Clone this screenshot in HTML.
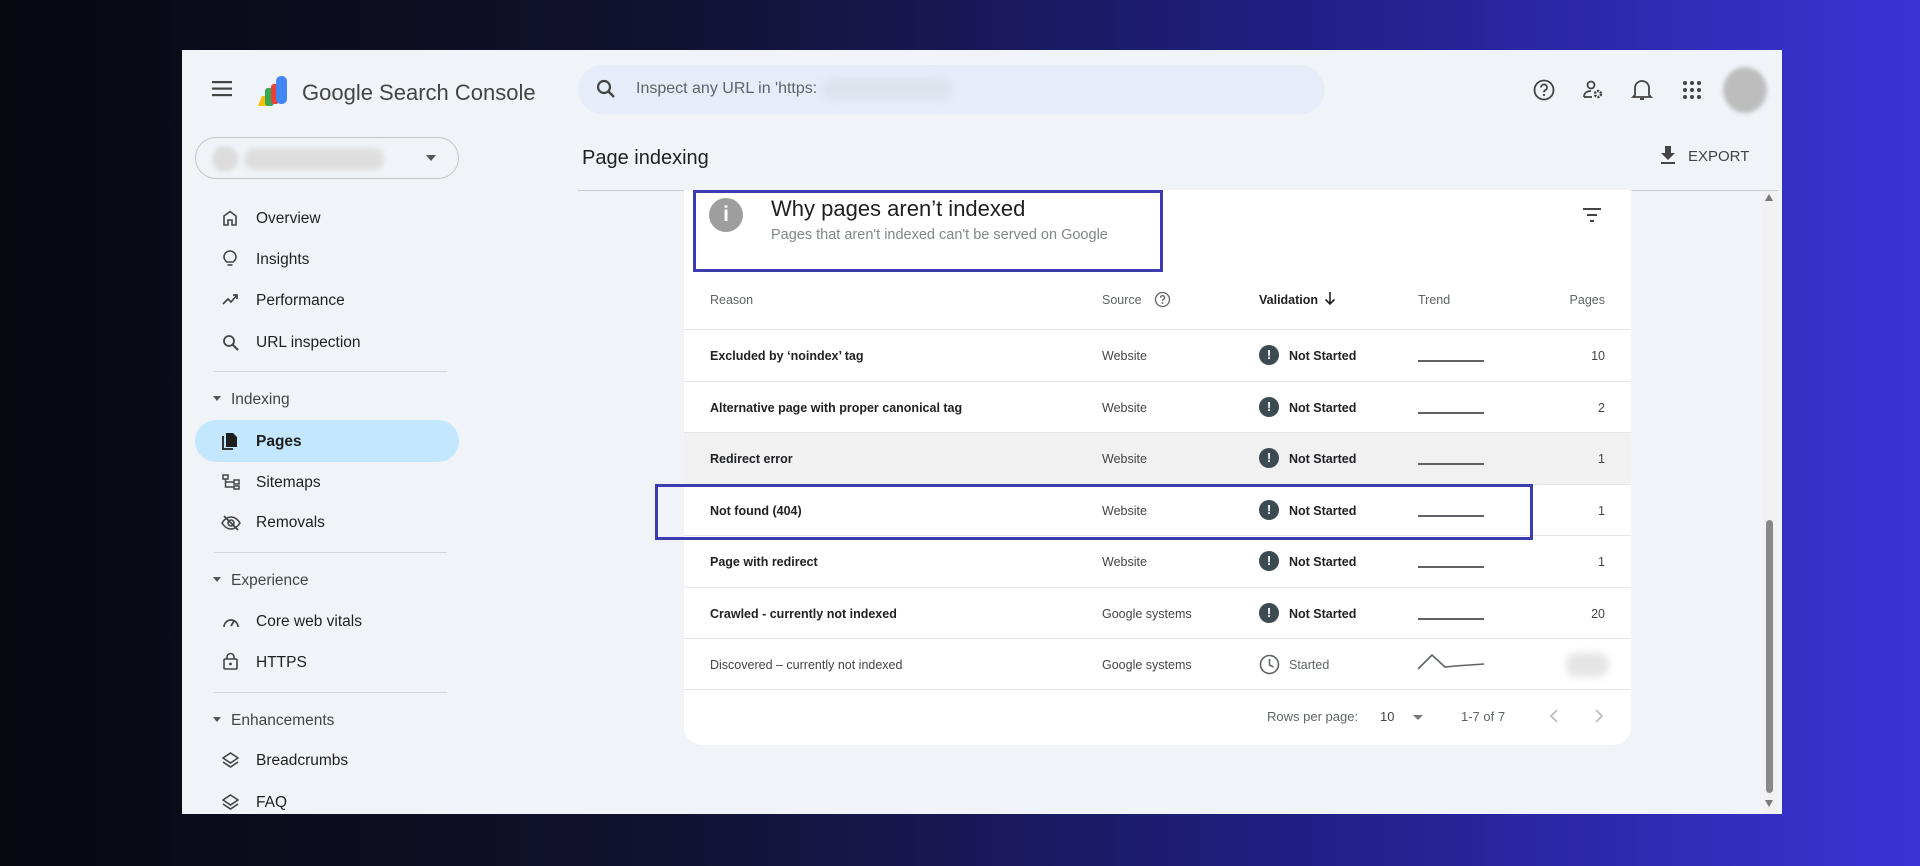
<!DOCTYPE html>
<html><head><meta charset="utf-8"><style>
*{margin:0;padding:0;box-sizing:border-box}
body{width:1920px;height:866px;overflow:hidden;font-family:"Liberation Sans",sans-serif;background:linear-gradient(90deg,#08080f 0%,#111230 35%,#22208a 70%,#3a34d6 100%);position:relative}
.a{position:absolute}
#panel{left:182px;top:50px;width:1600px;height:764px;background:#f0f4f9;overflow:hidden}
.t{position:absolute;white-space:nowrap;line-height:1}
.nav{font-size:15.5px;color:#1f1f1f}
.sec{font-size:15.5px;color:#444}
.div{position:absolute;height:1px;background:#d3d7dc}
.row{position:absolute;left:0;width:947px;height:52px;border-top:1px solid #e6e6e6}
.rt{position:absolute;top:19px;font-size:12.5px;color:#202124;font-weight:bold;white-space:nowrap}
.src{position:absolute;left:418px;top:19px;font-size:12.5px;color:#444}
.ns{position:absolute;left:575px;top:15px;width:20px;height:20px;border-radius:50%;background:#3c4a52;color:#fff;font-size:13px;font-weight:bold;text-align:center;line-height:20px}
.nst{position:absolute;left:605px;top:19px;font-size:12.5px;color:#202124;font-weight:bold}
.tr{position:absolute;left:734px;top:30px;width:66px;height:2px;background:#5f6368}
.pg{position:absolute;right:26px;top:19px;font-size:12.5px;color:#444}
</style></head><body>
<div id="panel" class="a">
 <svg class="a" style="left:30px;top:29px" width="22" height="20" viewBox="0 0 22 20"><rect y="2" width="20" height="2.2" fill="#444"/><rect y="8.5" width="20" height="2.2" fill="#444"/><rect y="15" width="20" height="2.2" fill="#444"/></svg>
 <svg class="a" style="left:74px;top:24px" width="36" height="34" viewBox="0 0 36 34"><path d="M2 32 L6 22 L12 22 L12 32Z" fill="#fbbc04"/><rect x="9" y="14" width="9" height="18" rx="3" fill="#34a853"/><rect x="15" y="10" width="8" height="20" rx="3" fill="#ea4335"/><rect x="20" y="2" width="11" height="28" rx="5" fill="#4285f4"/></svg>
 <div class="t" style="left:120px;top:32px;font-size:22px;color:#444">Google Search Console</div>
 <div class="a" style="left:396px;top:15px;width:747px;height:49px;border-radius:25px;background:#e6edf8"></div>
 <svg class="a" style="left:414px;top:29px" width="20" height="20" viewBox="0 0 20 20"><circle cx="8" cy="8" r="6" stroke="#444" stroke-width="2.2" fill="none"/><path d="M12.5 12.5 L18 18" stroke="#444" stroke-width="2.4"/></svg>
 <div class="t" style="left:454px;top:31px;font-size:16px;color:#5f6368">Inspect any URL in 'https:</div>
 <div class="a" style="left:640px;top:28px;width:130px;height:22px;border-radius:11px;background:#dde3ec;filter:blur(4px)"></div>
 <svg class="a" style="left:1350px;top:28px" width="24" height="24" viewBox="0 0 24 24"><circle cx="12" cy="12" r="9.5" stroke="#444" stroke-width="1.8" fill="none"/><path d="M9 9.5a3 3 0 1 1 4.2 2.7c-.9.5-1.2 1-1.2 2" stroke="#444" stroke-width="1.8" fill="none"/><circle cx="12" cy="17" r="1.1" fill="#444"/></svg>
 <svg class="a" style="left:1399px;top:28px" width="24" height="24" viewBox="0 0 24 24"><circle cx="10" cy="7" r="3.5" stroke="#444" stroke-width="1.8" fill="none"/><path d="M3 19c0-4 3-6 7-6" stroke="#444" stroke-width="1.8" fill="none"/><path d="M3 19h8" stroke="#444" stroke-width="1.8"/><circle cx="17" cy="16" r="3" stroke="#444" stroke-width="2.5" fill="none" stroke-dasharray="2 1.2"/></svg>
 <svg class="a" style="left:1448px;top:27px" width="24" height="26" viewBox="0 0 24 26"><path d="M5 18V11a7 7 0 0 1 14 0v7l2 2H3z" stroke="#444" stroke-width="1.8" fill="none"/><path d="M10 22h4" stroke="#444" stroke-width="2"/></svg>
 <svg class="a" style="left:1500px;top:30px" width="20" height="20" viewBox="0 0 20 20" fill="#444"><circle cx="3" cy="3" r="2"/><circle cx="10" cy="3" r="2"/><circle cx="17" cy="3" r="2"/><circle cx="3" cy="10" r="2"/><circle cx="10" cy="10" r="2"/><circle cx="17" cy="10" r="2"/><circle cx="3" cy="17" r="2"/><circle cx="10" cy="17" r="2"/><circle cx="17" cy="17" r="2"/></svg>
 <div class="a" style="left:1541px;top:17px;width:44px;height:46px;border-radius:50%;background:#bdbdbd;filter:blur(2px)"></div>

 <div class="a" style="left:13px;top:87px;width:264px;height:42px;border:1px solid #c4c7c5;border-radius:21px"></div>
 <div class="a" style="left:30px;top:96px;width:26px;height:26px;border-radius:50%;background:#dcdcdc;filter:blur(2px)"></div>
 <div class="a" style="left:62px;top:98px;width:140px;height:22px;border-radius:10px;background:#dedede;filter:blur(3px)"></div>
 <div class="a" style="left:244px;top:105px;width:0;height:0;border-left:5px solid transparent;border-right:5px solid transparent;border-top:6px solid #555"></div>

 <svg class="a" style="left:40px;top:160px" width="16" height="16" viewBox="0 0 16 16"><path d="M2 15V6l6-4.5L14 6v9h-4v-5H6v5z" stroke="#444" stroke-width="1.6" fill="none"/></svg>
 <div class="t nav" style="left:74px;top:161px">Overview</div>
 <svg class="a" style="left:41px;top:200px" width="14" height="18" viewBox="0 0 14 18"><path d="M4 12C2 10.5 1 9 1 7a6 6 0 0 1 12 0c0 2-1 3.5-3 5z" stroke="#444" stroke-width="1.6" fill="none"/><path d="M4.5 15h5" stroke="#444" stroke-width="1.6"/></svg>
 <div class="t nav" style="left:74px;top:202px">Insights</div>
 <svg class="a" style="left:40px;top:243px" width="17" height="12" viewBox="0 0 17 12"><path d="M1 11l5-5 3 3 6-7M11 2h4v4" stroke="#444" stroke-width="1.7" fill="none"/></svg>
 <div class="t nav" style="left:74px;top:243px">Performance</div>
 <svg class="a" style="left:40px;top:284px" width="17" height="17" viewBox="0 0 17 17"><circle cx="7" cy="7" r="5" stroke="#444" stroke-width="1.8" fill="none"/><path d="M10.5 10.5L16 16" stroke="#444" stroke-width="2"/></svg>
 <div class="t nav" style="left:74px;top:285px">URL inspection</div>
 <div class="div" style="left:32px;top:321px;width:233px"></div>
 <div class="a" style="left:31px;top:346px;border-left:4px solid transparent;border-right:4px solid transparent;border-top:5px solid #555"></div>
 <div class="t sec" style="left:49px;top:342px">Indexing</div>
 <div class="a" style="left:13px;top:370px;width:264px;height:42px;border-radius:21px;background:#c2e7ff"></div>
 <svg class="a" style="left:40px;top:382px" width="16" height="18" viewBox="0 0 16 18"><path d="M4 1h7l4 4v10H4z" fill="#1f1f1f"/><path d="M1 4v13h10" stroke="#1f1f1f" stroke-width="1.8" fill="none"/></svg>
 <div class="t nav" style="left:74px;top:384px;font-weight:bold">Pages</div>
 <svg class="a" style="left:40px;top:424px" width="18" height="16" viewBox="0 0 18 16"><rect x="1" y="1" width="5" height="4" stroke="#444" stroke-width="1.5" fill="none"/><rect x="12" y="6" width="5" height="4" stroke="#444" stroke-width="1.5" fill="none"/><rect x="12" y="12" width="5" height="3" stroke="#444" stroke-width="1.5" fill="none"/><path d="M3.5 5v8h8M3.5 8h8" stroke="#444" stroke-width="1.5" fill="none"/></svg>
 <div class="t nav" style="left:74px;top:425px">Sitemaps</div>
 <svg class="a" style="left:39px;top:465px" width="20" height="16" viewBox="0 0 20 16"><path d="M1 8c2.5-4 5.5-6 9-6s6.5 2 9 6c-2.5 4-5.5 6-9 6s-6.5-2-9-6z" stroke="#444" stroke-width="1.6" fill="none"/><circle cx="10" cy="8" r="3" stroke="#444" stroke-width="1.6" fill="none"/><path d="M3 1l14 14" stroke="#444" stroke-width="1.8"/></svg>
 <div class="t nav" style="left:74px;top:465px">Removals</div>
 <div class="div" style="left:32px;top:502px;width:233px"></div>
 <div class="a" style="left:31px;top:527px;border-left:4px solid transparent;border-right:4px solid transparent;border-top:5px solid #555"></div>
 <div class="t sec" style="left:49px;top:523px">Experience</div>
 <svg class="a" style="left:40px;top:564px" width="18" height="16" viewBox="0 0 18 16"><path d="M2 13a7 7 0 1 1 14 0" stroke="#444" stroke-width="1.7" fill="none"/><path d="M9 12l3-5" stroke="#444" stroke-width="1.8"/></svg>
 <div class="t nav" style="left:74px;top:564px">Core web vitals</div>
 <svg class="a" style="left:41px;top:602px" width="15" height="18" viewBox="0 0 15 18"><rect x="1" y="7" width="13" height="10" rx="1" stroke="#444" stroke-width="1.6" fill="none"/><path d="M4 7V5a3.5 3.5 0 0 1 7 0v2" stroke="#444" stroke-width="1.6" fill="none"/><circle cx="7.5" cy="12" r="1.4" fill="#444"/></svg>
 <div class="t nav" style="left:74px;top:605px">HTTPS</div>
 <div class="div" style="left:32px;top:642px;width:233px"></div>
 <div class="a" style="left:31px;top:667px;border-left:4px solid transparent;border-right:4px solid transparent;border-top:5px solid #555"></div>
 <div class="t sec" style="left:49px;top:663px">Enhancements</div>
 <svg class="a" style="left:40px;top:702px" width="17" height="17" viewBox="0 0 17 17"><path d="M8.5 1L16 6l-7.5 5L1 6z" stroke="#444" stroke-width="1.6" fill="none"/><path d="M1 10l7.5 5 7.5-5" stroke="#444" stroke-width="1.6" fill="none"/></svg>
 <div class="t nav" style="left:74px;top:703px">Breadcrumbs</div>
 <svg class="a" style="left:40px;top:744px" width="17" height="17" viewBox="0 0 17 17"><path d="M8.5 1L16 6l-7.5 5L1 6z" stroke="#444" stroke-width="1.6" fill="none"/><path d="M1 10l7.5 5 7.5-5" stroke="#444" stroke-width="1.6" fill="none"/></svg>
 <div class="t nav" style="left:74px;top:745px">FAQ</div>

 <div class="t" style="left:400px;top:98px;font-size:20px;color:#1f1f1f">Page indexing</div>
 <svg class="a" style="left:1477px;top:95px" width="18" height="20" viewBox="0 0 18 20"><path d="M6 1h6v7h4l-7 7-7-7h4z" fill="#444"/><rect x="2" y="17" width="14" height="2" fill="#444"/></svg>
 <div class="t" style="left:1506px;top:99px;font-size:15px;color:#444">EXPORT</div>
 <div class="div" style="left:396px;top:140px;width:1200px;background:#c9ccd0"></div>

 <div class="a" style="left:1581px;top:141px;width:13px;height:623px;background:#f1f1f1"></div>
 <div class="a" style="left:1583px;top:144px;border-left:4px solid transparent;border-right:4px solid transparent;border-bottom:7px solid #777"></div>
 <div class="a" style="left:1583px;top:750px;border-left:4px solid transparent;border-right:4px solid transparent;border-top:7px solid #777"></div>
 <div class="a" style="left:1584px;top:470px;width:7px;height:273px;border-radius:4px;background:#888"></div>

 <div class="a" style="left:502px;top:140px;width:947px;height:555px;background:#fff;border-radius:0 0 18px 18px;overflow:hidden">
  <div class="a" style="left:25px;top:8px;width:34px;height:34px;border-radius:50%;background:#9e9e9e;color:#fff;font-weight:bold;font-size:21px;text-align:center;line-height:34px">i</div>
  <div class="t" style="left:87px;top:8px;font-size:22px;color:#1f1f1f">Why pages aren’t indexed</div>
  <div class="t" style="left:87px;top:38px;font-size:14.5px;color:#80868b">Pages that aren't indexed can't be served on Google</div>
  <svg class="a" style="left:898px;top:17px" width="20" height="16" viewBox="0 0 20 16"><path d="M1 2h18M5 8h10M8 14h4" stroke="#444" stroke-width="2"/></svg>
  <div class="t" style="left:26px;top:104px;font-size:12.5px;color:#5f6368">Reason</div>
  <div class="t" style="left:418px;top:104px;font-size:12.5px;color:#5f6368">Source</div>
  <svg class="a" style="left:470px;top:101px" width="17" height="17" viewBox="0 0 17 17"><circle cx="8.5" cy="8.5" r="7" stroke="#5f6368" stroke-width="1.3" fill="none"/><path d="M6.5 6.7a2 2 0 1 1 2.8 1.8c-.6.3-.8.7-.8 1.4" stroke="#5f6368" stroke-width="1.3" fill="none"/><circle cx="8.5" cy="12" r=".9" fill="#5f6368"/></svg>
  <div class="t" style="left:575px;top:104px;font-size:12.5px;color:#202124;font-weight:bold">Validation</div>
  <svg class="a" style="left:640px;top:101px" width="12" height="15" viewBox="0 0 12 15"><path d="M6 1v12M1.5 8.5L6 13l4.5-4.5" stroke="#202124" stroke-width="1.6" fill="none"/></svg>
  <div class="t" style="left:734px;top:104px;font-size:12.5px;color:#5f6368">Trend</div>
  <div class="t" style="right:26px;top:104px;font-size:12.5px;color:#5f6368">Pages</div>

  <div class="row" style="top:139px"><div class="rt" style="left:26px">Excluded by ‘noindex’ tag</div><div class="src">Website</div><div class="ns">!</div><div class="nst">Not Started</div><div class="tr"></div><div class="pg">10</div></div>
  <div class="row" style="top:191px"><div class="rt" style="left:26px">Alternative page with proper canonical tag</div><div class="src">Website</div><div class="ns">!</div><div class="nst">Not Started</div><div class="tr"></div><div class="pg">2</div></div>
  <div class="row" style="top:242px;background:#f1f1f1"><div class="rt" style="left:26px">Redirect error</div><div class="src">Website</div><div class="ns">!</div><div class="nst">Not Started</div><div class="tr"></div><div class="pg">1</div></div>
  <div class="row" style="top:294px"><div class="rt" style="left:26px">Not found (404)</div><div class="src">Website</div><div class="ns">!</div><div class="nst">Not Started</div><div class="tr"></div><div class="pg">1</div></div>
  <div class="row" style="top:345px"><div class="rt" style="left:26px">Page with redirect</div><div class="src">Website</div><div class="ns">!</div><div class="nst">Not Started</div><div class="tr"></div><div class="pg">1</div></div>
  <div class="row" style="top:397px"><div class="rt" style="left:26px">Crawled - currently not indexed</div><div class="src">Google systems</div><div class="ns">!</div><div class="nst">Not Started</div><div class="tr"></div><div class="pg">20</div></div>
  <div class="row" style="top:448px;border-bottom:1px solid #e6e6e6"><div class="rt" style="left:26px;font-weight:normal;color:#444">Discovered – currently not indexed</div><div class="src">Google systems</div>
   <svg class="a" style="left:575px;top:15px" width="21" height="21" viewBox="0 0 21 21"><circle cx="10.5" cy="10.5" r="9" stroke="#5f6368" stroke-width="1.6" fill="none"/><path d="M10.5 5v6l4 2" stroke="#5f6368" stroke-width="1.6" fill="none"/></svg>
   <div class="nst" style="font-weight:normal;color:#5f6368">Started</div>
   <svg class="a" style="left:733px;top:12px" width="68" height="20" viewBox="0 0 68 20"><path d="M1 18L15 4l13 12 10-1 29-2" stroke="#5f6368" stroke-width="1.6" fill="none"/></svg>
   <div class="a" style="left:882px;top:14px;width:42px;height:24px;border-radius:10px;background:#e4e4e4;filter:blur(4px)"></div>
  </div>

  <div class="t" style="left:583px;top:520px;font-size:13px;color:#5f6368">Rows per page:</div>
  <div class="t" style="left:696px;top:520px;font-size:13px;color:#444">10</div>
  <div class="a" style="left:729px;top:525px;border-left:5px solid transparent;border-right:5px solid transparent;border-top:5px solid #777"></div>
  <div class="t" style="left:777px;top:520px;font-size:13px;color:#5f6368">1-7 of 7</div>
  <svg class="a" style="left:865px;top:518px" width="10" height="16" viewBox="0 0 10 16"><path d="M8 2L2 8l6 6" stroke="#bbb" stroke-width="1.8" fill="none"/></svg>
  <svg class="a" style="left:910px;top:518px" width="10" height="16" viewBox="0 0 10 16"><path d="M2 2l6 6-6 6" stroke="#bbb" stroke-width="1.8" fill="none"/></svg>
 </div>

 <div class="a" style="left:511px;top:140px;width:470px;height:82px;border:3px solid #3c3cb0"></div>
 <div class="a" style="left:473px;top:434px;width:878px;height:56px;border:3px solid #3c3cb0"></div>
</div>
</body></html>
